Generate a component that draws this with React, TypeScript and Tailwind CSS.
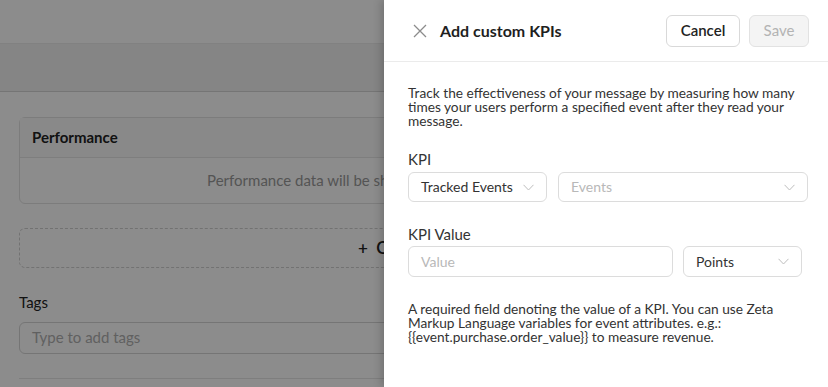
import React from 'react';

const font = { fontFamily: 'Lato, "Open Sans", sans-serif' };

const Chevron = () => (
  <svg width="11" height="7" viewBox="0 0 11 7" fill="none" className="shrink-0">
    <path d="M0.5 0.8 L5.5 6 L10.5 0.8" stroke="#bdbdbd" strokeWidth="1" />
  </svg>
);

const Select: React.FC<{ label: string; placeholder?: boolean; className: string }> = ({ label, placeholder, className }) => (
  <div className={`flex shrink-0 items-center justify-between rounded-md border border-[#dcdcdc] bg-white pl-3 pr-[12px] ${className}`}>
    <span className={`text-[14px] leading-[18px] ${placeholder ? 'text-[#b8b8b8]' : 'text-[#333]'}`}>{label}</span>
    <Chevron />
  </div>
);

// Page behind the overlay
const Background = () => (
  <div className="flex h-full w-full flex-col bg-white">
    <div className="h-[44px] border-b border-[#ececec] bg-white" />
    <div className="h-[48px] border-b border-[#d6d6d6] bg-[#f2f2f2]" />
    <div className="flex flex-col px-[19px] pt-[25px]">
      <div className="rounded-md border border-[#e2e2e2] bg-white">
        <div className="flex h-[40px] items-center border-b border-[#e6e6e6] bg-[#fafafa] px-3 text-[15px] font-bold text-[#222]">
          Performance
        </div>
        <div className="flex h-[45px] items-center justify-center text-[15px] text-[#9a9a9a]">
          Performance data will be shown here once the message is sent.
        </div>
      </div>
      <div className="mt-[24px] flex h-[40px] items-center justify-center rounded-md border border-dashed border-[#cfcfcf]">
        <span className="text-[17px] font-semibold text-[#222]">+&nbsp; Create a KPI</span>
      </div>
      <div className="mt-[23px] text-[15px] text-[#222]">Tags</div>
      <div className="mt-[8px] flex h-[32px] items-center rounded-md border border-[#d6d6d6] px-3 text-[15px] text-[#b0b0b0]">
        Type to add tags
      </div>
      <div className="mt-[24px] border-t border-[#e6e6e6]" />
    </div>
  </div>
);

export default function App() {
  return (
    <div className="relative h-[387px] w-[828px] overflow-hidden" style={font}>
      <Background />
      <div className="absolute inset-0 bg-black/45" />
      <div className="absolute right-0 top-0 flex h-full w-[444px] flex-col bg-white shadow-[-3px_0_8px_rgba(0,0,0,0.18)]">
        <div className="flex h-[62px] shrink-0 items-center border-b border-[#ebebeb] pl-[29px] pr-[19px]">
          <svg width="14" height="14" viewBox="0 0 14 14" className="shrink-0">
            <path d="M1 1 L13 13 M13 1 L1 13" stroke="#8c8c8c" strokeWidth="1.3" />
          </svg>
          <div className="ml-[13px] flex-1 text-[16px] font-bold text-[#1f1f1f]">Add custom KPIs</div>
          <button className="h-[32px] w-[74px] rounded-md border border-[#d9d9d9] bg-white text-[15px] font-semibold text-[#222]">
            Cancel
          </button>
          <button className="ml-[9px] h-[32px] w-[60px] rounded-md border border-[#e2e2e2] bg-[#f4f4f4] text-[15px] text-[#b3b3b3]">
            Save
          </button>
        </div>
        <div className="flex flex-col px-6 pt-[24px] text-[13.7px] leading-[14px] text-[#333]">
          <p className="w-[400px]">
            Track the effectiveness of your message by measuring how many times your users perform a specified event after they read your message.
          </p>
          <div className="mt-[21px] text-[15px] leading-[20px]">KPI</div>
          <div className="mt-[3px] flex gap-[11px]">
            <Select label="Tracked Events" className="h-[30px] w-[139px]" />
            <Select label="Events" placeholder className="h-[30px] w-[250px]" />
          </div>
          <div className="mt-[22px] text-[15px] leading-[20px]">KPI Value</div>
          <div className="mt-[2px] flex gap-[10px]">
            <div className="flex h-[31px] w-[265px] shrink-0 items-center rounded-md border border-[#dcdcdc] px-3 text-[14px] leading-[18px] text-[#b8b8b8]">
              Value
            </div>
            <Select label="Points" className="h-[31px] w-[119px]" />
          </div>
          <p className="mt-[25px] w-[396px]">
            A required field denoting the value of a KPI. You can use Zeta Markup Language variables for event attributes. e.g.: {'{{event.purchase.order_value}}'} to measure revenue.
          </p>
        </div>
      </div>
    </div>
  );
}
